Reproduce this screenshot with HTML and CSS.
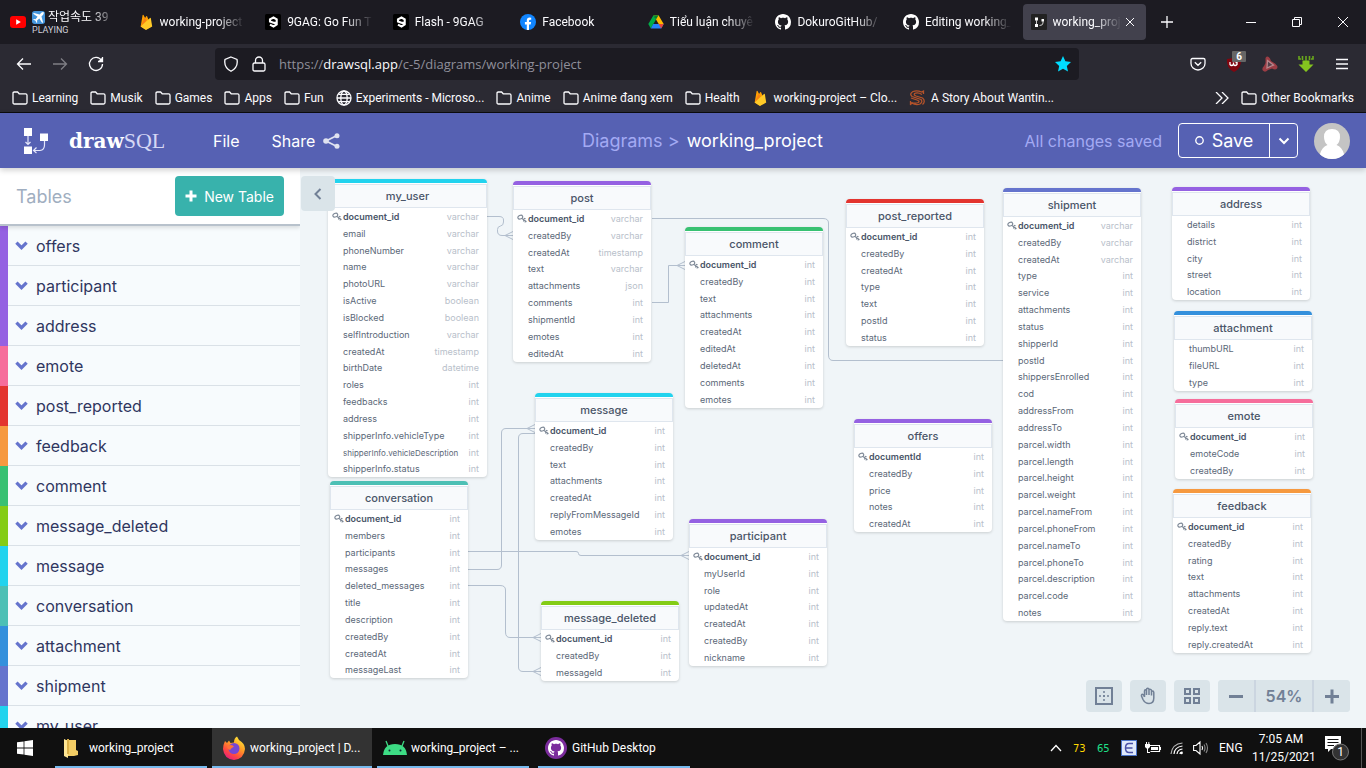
FILE: index.html
```html
<!DOCTYPE html>
<html lang="en">
<head>
<meta charset="utf-8">
<meta name="viewport" content="width=device-width, initial-scale=1">
<title>working_project | DrawSQL</title>
<link rel="stylesheet" href="styles.css">
</head>
<body>
<svg class="defs" aria-hidden="true">
  <symbol id="folder" viewBox="0 0 16 14"><path d="M1 11.5V2.3Q1 1 2.3 1H5.6L7.2 2.8H13.6Q15 2.8 15 4.2V11.5Q15 13 13.6 13H2.4Q1 13 1 11.5Z" fill="none" stroke="#fbfbfe" stroke-width="1.3"/></symbol>
  <symbol id="fire" viewBox="0 0 16 18"><path d="M2 14 4.2 1.2Q4.6.4 5.2 1.2L7 4.6 8.2 2.6Q8.7 2 9.200 2.600L14 14 8 17.600Z" fill="#ffa000"/><path d="M2 14 8.600 7.200 6.600 4 Z" fill="#f57f17"/><path d="M2 14 12.500 4.500Q13.300 4 13.500 5L15 14 9 17.500Q8 18 7 17.500Z" fill="#ffca28"/></symbol>
  <symbol id="ninegag" viewBox="0 0 16 16"><rect width="16" height="16" rx="1.500" fill="#000"/><path d="M11.700 8.300Q10.500 9.300 8.500 8.700L5 7.400V5.300L8.500 3.500 11.700 5.300V10.500L8.500 12.500 5 10.600" fill="none" stroke="#fff" stroke-width="2.100"/></symbol>
  <symbol id="github" viewBox="0 0 16 16"><path d="M8 0C3.580 0 0 3.580 0 8c0 3.540 2.290 6.530 5.470 7.590.4.070.55-.17.55-.38 0-.19-.01-.82-.01-1.490-2.010.37-2.530-.49-2.690-.94-.09-.23-.48-.94-.82-1.130-.28-.15-.68-.52-.01-.53.63-.01 1.080.58 1.230.82.72 1.210 1.870.87 2.330.66.07-.52.28-.87.51-1.070-1.780-.2-3.640-.89-3.640-3.950 0-.87.31-1.590.82-2.150-.08-.2-.36-1.020.08-2.120 0 0 .67-.21 2.200.82.64-.18 1.320-.27 2-.27s1.360.09 2 .27c1.530-1.040 2.200-.82 2.200-.82.44 1.100.16 1.920.08 2.120.51.56.82 1.270.82 2.150 0 3.070-1.870 3.750-3.650 3.950.29.25.54.73.54 1.480 0 1.070-.01 1.930-.01 2.200 0 .21.15.46.55.38A8.010 8.010 0 0 0 16 8c0-4.420-3.580-8-8-8Z"/></symbol>
  <symbol id="key" viewBox="0 0 10 9"><g fill="none" stroke="#7d8896" stroke-width="1.100"><ellipse cx="3.300" cy="3.200" rx="2.500" ry="1.800" transform="rotate(-25 3.300 3.200)"/><path d="M5 4.500 9.500 7.800M6.800 5.800 6.500 7.500M8.300 6.900 8.100 8.500M6.800 4.300 8.600 4.800"/></g></symbol>
  <symbol id="chev" viewBox="0 0 12 8"><path d="M1.300 1.300 6 6 10.700 1.300" fill="none" stroke="#6574cd" stroke-width="3"/></symbol>
</svg>

<header class="browser">
  <div class="tabstrip">
    <div class="tabs">
      <div class="tab">
        <svg class="fav" viewBox="0 0 16 16"><rect y="2" width="16" height="12" rx="3" fill="#f00"/><path d="M6.200 5.300V10.700L10.800 8Z" fill="#fff"/></svg>
        <div class="tab-text"><div class="tab-title"><svg class="plane" viewBox="0 0 14 14"><rect width="14" height="14" rx="3" fill="#4596dd"/><path d="M12.500 1.200Q11.500.6 10 2L8.300 3.900 2 2.200 1.200 3 6 6.300 3.800 8.800 1.800 8.500 1.200 9.200 3.700 10.500 5 12.900 5.600 12.300 5.400 10.300 7.900 8 11 12.800 11.900 12 10.200 5.800 12 4Q13.200 2.300 12.500 1.200Z" fill="#fff"/></svg> 작업속도 39</div><div class="playing">PLAYING</div></div>
      </div>
      <div class="tab"><svg class="fav"><use href="#fire"/></svg><div class="tab-title">working-project</div></div>
      <div class="tab"><svg class="fav"><use href="#ninegag"/></svg><div class="tab-title">9GAG: Go Fun T</div></div>
      <div class="tab"><svg class="fav"><use href="#ninegag"/></svg><div class="tab-title">Flash - 9GAG</div></div>
      <div class="tab"><svg class="fav" viewBox="0 0 16 16"><circle cx="8" cy="8" r="8" fill="#1185fe"/><path d="M6.800 16V10.400H4.900V8H6.800V6.500Q6.800 3.500 9.600 3.500L11.200 3.700V5.700H10.200Q9 5.700 9 6.900V8H11.100L10.700 10.400H9V16Z" fill="#fff"/></svg><div class="tab-title">Facebook</div></div>
      <div class="tab"><svg class="fav" viewBox="0 0 16 16"><path d="M5.500 1.200H10.500L15.700 10H10.700Z" fill="#ffba00"/><path d="M5.500 1.200 8 5.500 2.800 14.500.3 10Z" fill="#00ac47"/><path d="M5.200 10H15.700L13.200 14.500H2.800Z" fill="#2684fc"/><path d="M5.500 1.200H10.500L8 5.500Z" fill="#00832d"/><path d="M10.700 10H15.700L13.200 14.500Z" fill="#ea4335"/></svg><div class="tab-title">Tiểu luận chuyê</div></div>
      <div class="tab"><svg class="fav gh"><use href="#github"/></svg><div class="tab-title">DokuroGitHub/</div></div>
      <div class="tab"><svg class="fav gh"><use href="#github"/></svg><div class="tab-title">Editing working_</div></div>
      <div class="tab active"><svg class="fav" viewBox="0 0 16 16"><rect width="16" height="16" rx="1" fill="#222"/><path d="M4 3.500h3v3H4zM4 10h3v3H4zM10.500 5h2.500v2.500h-2.500z" fill="#fff"/><path d="M5.500 6V10M12 7V9Q12 11.500 8.500 11.500" fill="none" stroke="#ccc"/></svg><div class="tab-title">working_proje</div><button class="tab-close" aria-label="Close tab"><svg viewBox="0 0 8 8"><path d="M0 0 8 8M8 0 0 8"/></svg></button></div>
    </div>
    <button class="newtab" aria-label="New tab"><svg viewBox="0 0 12 12"><path d="M6 0V12M0 6H12"/></svg></button>
    <div class="winbtns">
      <button aria-label="Minimize"><svg viewBox="0 0 10 10"><path d="M0 5.500H10"/></svg></button>
      <button aria-label="Restore"><svg viewBox="0 0 10 10"><path d="M.5 2.500H7.500V9.500H.5ZM2.500 2.500V.5H9.500V7.500H7.500"/></svg></button>
      <button aria-label="Close"><svg viewBox="0 0 10 10"><path d="M0 0 10 10M10 0 0 10"/></svg></button>
    </div>
  </div>
  <div class="navbar">
    <div class="navbtns">
      <button aria-label="Back"><svg viewBox="0 0 16 16"><path d="M15 8H1.500M7 2.500 1.500 8 7 13.500"/></svg></button>
      <button class="dim" aria-label="Forward"><svg viewBox="0 0 16 16"><path d="M1 8H14.500M9 2.500 14.500 8 9 13.500"/></svg></button>
      <button aria-label="Reload"><svg viewBox="0 0 16 16"><path d="M13.500 4.500A6.500 6.500 0 1 0 14.500 8M14.500 1V5.500H10"/><path d="M14.800 1V5.800H10Z" fill="#fbfbfe" stroke="none"/></svg></button>
    </div>
    <div class="urlbar">
      <svg viewBox="0 0 16 16"><path d="M8 1 14 3.500Q15.500 11 8 15.300.5 11 2 3.500Z"/></svg>
      <svg viewBox="0 0 16 16"><path d="M3.500 7H12.500Q14 7 14 8.500V13.500Q14 15 12.500 15H3.500Q2 15 2 13.500V8.500Q2 7 3.500 7ZM4.500 7V4.500A3.500 3.500 0 0 1 11.500 4.500V7"/></svg>
      <div class="url" role="textbox" aria-label="Address" contenteditable="true">https://<b>drawsql.app</b>/c-5/diagrams/working-project</div>
      <svg class="star" viewBox="0 0 16 16"><path d="M8 0 10.400 5.300 16 6 11.800 9.900 13 15.600 8 12.700 3 15.600 4.200 9.900 0 6 5.600 5.300Z"/></svg>
    </div>
    <div class="exts">
      <button aria-label="Pocket"><svg viewBox="0 0 16 16"><path d="M2.500 2.500H13.500Q15 2.500 15 4V7.500A7 6.500 0 0 1 1 7.500V4Q1 2.500 2.500 2.500ZM4.800 6.200 8 9.300 11.200 6.200" fill="none"/></svg></button>
      <button class="ublock" aria-label="uBlock Origin"><svg viewBox="0 0 16 16"><path d="M8 1Q11 3 15 3 16 12 8 16 0 12 1 3 5 3 8 1Z" fill="#800610" stroke="none"/><path d="M4 6V8.500Q5.500 10.500 7.500 8.500V6.500M7.500 8.500Q9 10.500 11 8.500V6.500H9.500" stroke="#fff"/></svg><span>6</span></button>
      <button aria-label="Extension"><svg viewBox="0 0 16 16"><path d="M3.500 2Q5.500-1 8 2.500L9 5 13 7.500Q17 11 14.500 13 13 14 10 12.500L6 14Q3 17 .8 14.500-.5 12.500 2 10L3.500 7Z" fill="#9c3d45" stroke="none"/><path d="M5.500 4.500 11.500 9 5 12Z" fill="#55404a" stroke="#b9868c"/></svg></button>
      <button aria-label="Downloads"><svg viewBox="0 0 16 16"><path d="M4.500 4.500H11.500V8.500H15.500L8 16 .5 8.500H4.500Z" fill="#84c41f" stroke="none"/><path d="M1 0V3H3M15 0V3H13M4.500 0V4M8 0V5M11.500 0V4" stroke="#6aa81c" stroke-width="1.600"/></svg></button>
      <button aria-label="Menu"><svg viewBox="0 0 16 16"><path d="M2 3.500H14M2 8H14M2 12.500H14"/></svg></button>
    </div>
  </div>
  <nav class="bookmarks">
    <a href="#"><svg><use href="#folder"/></svg>Learning</a>
    <a href="#"><svg><use href="#folder"/></svg>Musik</a>
    <a href="#"><svg><use href="#folder"/></svg>Games</a>
    <a href="#"><svg><use href="#folder"/></svg>Apps</a>
    <a href="#"><svg><use href="#folder"/></svg>Fun</a>
    <a href="#" class="globe"><svg viewBox="0 0 16 16"><g fill="none" stroke="#fbfbfe" stroke-width="1.300"><circle cx="8" cy="8" r="7"/><ellipse cx="8" cy="8" rx="3.200" ry="7"/><path d="M1 8H15M2.500 4.300H13.500M2.500 11.700H13.500"/></g></svg>Experiments - Microso...</a>
    <a href="#"><svg><use href="#folder"/></svg>Anime</a>
    <a href="#"><svg><use href="#folder"/></svg>Anime đang xem</a>
    <a href="#"><svg><use href="#folder"/></svg>Health</a>
    <a href="#" class="site"><svg><use href="#fire"/></svg>working-project – Clo...</a>
    <a href="#" class="site"><svg viewBox="0 0 16 16"><g fill="none" stroke="#b5532a" stroke-width="1.300"><path d="M14.500 4V1L12.500 2Q8 0 4 1.500 0 4 3 6.500L12 9.500Q14 12 11 14 7 15.500 2.500 13L1.500 15V11"/><path d="M13 4.500Q9 2 5.500 3.500 4.500 5 7 6L13.500 8Q17 11 13.500 14.500M2.500 12.500Q6 14 9.500 12.500 11 11 8 10L2 8"/></g></svg>A Story About Wantin...</a>
    <button class="more" aria-label="More bookmarks"><svg viewBox="0 0 14 12"><path d="M1 0 7 6 1 12M7 0 13 6 7 12"/></svg></button>
    <a href="#" class="other"><svg><use href="#folder"/></svg>Other Bookmarks</a>
  </nav>
</header>

<div class="app">
  <header class="appbar">
    <a class="logo" href="#" aria-label="drawSQL">
      <svg viewBox="0 0 24 26"><path d="M0 0H8V8H0ZM0 18.500H8V26H0ZM16 5.500H24V13H16Z" fill="#fff"/><path d="M4 8V16M1.500 14 4 16.500 6.500 14M20.500 13V17Q20.500 22 16 22.500H9.500M12.500 19.500 9.500 22.500 12.500 25" fill="none" stroke="#e4e6fa" stroke-width="1.200"/></svg>
      <span class="brand"><b>draw</b><span>SQL</span></span>
    </a>
    <button class="menu">File</button>
    <button class="menu share">Share <svg viewBox="0 0 17 16"><path d="M14 2.500 3 8 14 13.500" fill="none" stroke="#dfe2f0" stroke-width="1.800"/><g fill="#dfe2f0"><circle cx="14" cy="2.700" r="2.500"/><circle cx="3" cy="8" r="2.800"/><circle cx="14" cy="13.300" r="2.500"/></g></svg></button>
    <nav class="crumbs"><a href="#">Diagrams &gt;</a> <span>working_project</span></nav>
    <span class="saved">All changes saved</span>
    <div class="savegroup">
      <button class="save"><svg viewBox="0 0 8 8"><circle cx="4" cy="4" r="3.300" fill="none" stroke="#fff" stroke-width="1.200"/></svg>Save</button>
      <button class="drop" aria-label="Save options"><svg viewBox="0 0 12 8"><path d="M1.500 1.500 6 6 10.500 1.500" fill="none" stroke="#fff" stroke-width="2"/></svg></button>
    </div>
    <svg class="avatar" viewBox="0 0 36 36"><defs><clipPath id="av"><circle cx="18" cy="18" r="18"/></clipPath></defs><g clip-path="url(#av)"><rect width="36" height="36" fill="#c4c4c4"/><path d="M10 14Q10 6 18 6T26 14Q26 19 22.500 22 28 24 30 31L30 36H6V31Q8 24 13.500 22 10 19 10 14Z" fill="#fff"/></g></svg>
  </header>

  <div class="work">
    <aside class="sidebar">
      <div class="side-head"><h2>Tables</h2><button class="new"><svg viewBox="0 0 12 12"><path d="M6 .5V11.500M.5 6H11.500" stroke="#fff" stroke-width="3"/></svg>New Table</button></div>
      <ul class="list">
        <li class="purple"><button><svg><use href="#chev"/></svg>offers</button></li>
        <li class="purple"><button><svg><use href="#chev"/></svg>participant</button></li>
        <li class="purple"><button><svg><use href="#chev"/></svg>address</button></li>
        <li class="pink"><button><svg><use href="#chev"/></svg>emote</button></li>
        <li class="red"><button><svg><use href="#chev"/></svg>post_reported</button></li>
        <li class="orange"><button><svg><use href="#chev"/></svg>feedback</button></li>
        <li class="green"><button><svg><use href="#chev"/></svg>comment</button></li>
        <li class="lime"><button><svg><use href="#chev"/></svg>message_deleted</button></li>
        <li class="cyan"><button><svg><use href="#chev"/></svg>message</button></li>
        <li class="teal"><button><svg><use href="#chev"/></svg>conversation</button></li>
        <li class="blue"><button><svg><use href="#chev"/></svg>attachment</button></li>
        <li class="indigo"><button><svg><use href="#chev"/></svg>shipment</button></li>
        <li class="cyan"><button><svg><use href="#chev"/></svg>my_user</button></li>
      </ul>
    </aside>
    <main class="canvas">
      <svg class="links" aria-hidden="true"><g transform="translate(-300 -168)">
        <path d="M487 216.500H499Q503.500 216.500 503.500 220V222Q503.500 225.500 500.500 226 497.500 226.500 497.500 229.500V231Q497.500 235.500 502 235.500H513M505 235.500 513 231.500M505 235.500 513 239.500"/>
        <path d="M652 218.500H823Q828.500 218.500 828.500 223V355Q828.500 360.500 833 360.500H1003"/>
        <path d="M652 302.500H668.500V265.500H685M677 265.500 685 261.500M677 265.500 685 269.500"/>
        <path d="M468 569.500H497Q501.500 569.500 501.500 565V433Q501.500 428.500 506 428.500H535M527 428.500 535 424.500M527 428.500 535 432.500"/>
        <path d="M535 433.500H523Q518.500 433.500 518.500 438V667Q518.500 671.500 523 671.500H541M533 671.500 541 667.500M533 671.500 541 675.500"/>
        <path d="M468 585.500H500Q505.500 585.500 505.500 590V632Q505.500 637.500 510 637.500H541M533 637.500 541 633.500M533 637.500 541 641.500"/>
        <path d="M468 551.500H576Q578.500 551.500 578.500 553.500T581 555.500H689M681 555.500 689 551.500M681 555.500 689 559.500"/>
      </g></svg>

      <section class="node n-user cyan"><h3>my_user</h3><table>
        <tr class="pk"><td><svg><use href="#key"/></svg>document_id<td>varchar
        <tr><td>email<td>varchar
        <tr><td>phoneNumber<td>varchar
        <tr><td>name<td>varchar
        <tr><td>photoURL<td>varchar
        <tr><td>isActive<td>boolean
        <tr><td>isBlocked<td>boolean
        <tr><td>selfIntroduction<td>varchar
        <tr><td>createdAt<td>timestamp
        <tr><td>birthDate<td>datetime
        <tr><td>roles<td>int
        <tr><td>feedbacks<td>int
        <tr><td>address<td>int
        <tr><td>shipperInfo.vehicleType<td>int
        <tr><td class="long">shipperInfo.vehicleDescription<td>int
        <tr><td>shipperInfo.status<td>int
      </table></section>
      <section class="node n-post purple"><h3>post</h3><table>
        <tr class="pk"><td><svg><use href="#key"/></svg>document_id<td>varchar
        <tr><td>createdBy<td>varchar
        <tr><td>createdAt<td>timestamp
        <tr><td>text<td>varchar
        <tr><td>attachments<td>json
        <tr><td>comments<td>int
        <tr><td>shipmentId<td>int
        <tr><td>emotes<td>int
        <tr><td>editedAt<td>int
      </table></section>
      <section class="node n-comment green"><h3>comment</h3><table>
        <tr class="pk"><td><svg><use href="#key"/></svg>document_id<td>int
        <tr><td>createdBy<td>int
        <tr><td>text<td>int
        <tr><td>attachments<td>int
        <tr><td>createdAt<td>int
        <tr><td>editedAt<td>int
        <tr><td>deletedAt<td>int
        <tr><td>comments<td>int
        <tr><td>emotes<td>int
      </table></section>
      <section class="node n-reported red"><h3>post_reported</h3><table>
        <tr class="pk"><td><svg><use href="#key"/></svg>document_id<td>int
        <tr><td>createdBy<td>int
        <tr><td>createdAt<td>int
        <tr><td>type<td>int
        <tr><td>text<td>int
        <tr><td>postId<td>int
        <tr><td>status<td>int
      </table></section>
      <section class="node n-shipment indigo"><h3>shipment</h3><table>
        <tr class="pk"><td><svg><use href="#key"/></svg>document_id<td>varchar
        <tr><td>createdBy<td>varchar
        <tr><td>createdAt<td>varchar
        <tr><td>type<td>int
        <tr><td>service<td>int
        <tr><td>attachments<td>int
        <tr><td>status<td>int
        <tr><td>shipperId<td>int
        <tr><td>postId<td>int
        <tr><td>shippersEnrolled<td>int
        <tr><td>cod<td>int
        <tr><td>addressFrom<td>int
        <tr><td>addressTo<td>int
        <tr><td>parcel.width<td>int
        <tr><td>parcel.length<td>int
        <tr><td>parcel.height<td>int
        <tr><td>parcel.weight<td>int
        <tr><td>parcel.nameFrom<td>int
        <tr><td>parcel.phoneFrom<td>int
        <tr><td>parcel.nameTo<td>int
        <tr><td>parcel.phoneTo<td>int
        <tr><td>parcel.description<td>int
        <tr><td>parcel.code<td>int
        <tr><td>notes<td>int
      </table></section>
      <section class="node n-address purple"><h3>address</h3><table>
        <tr><td>details<td>int
        <tr><td>district<td>int
        <tr><td>city<td>int
        <tr><td>street<td>int
        <tr><td>location<td>int
      </table></section>
      <section class="node n-attachment blue"><h3>attachment</h3><table>
        <tr><td>thumbURL<td>int
        <tr><td>fileURL<td>int
        <tr><td>type<td>int
      </table></section>
      <section class="node n-emote pink"><h3>emote</h3><table>
        <tr class="pk"><td><svg><use href="#key"/></svg>document_id<td>int
        <tr><td>emoteCode<td>int
        <tr><td>createdBy<td>int
      </table></section>
      <section class="node n-feedback orange"><h3>feedback</h3><table>
        <tr class="pk"><td><svg><use href="#key"/></svg>document_id<td>int
        <tr><td>createdBy<td>int
        <tr><td>rating<td>int
        <tr><td>text<td>int
        <tr><td>attachments<td>int
        <tr><td>createdAt<td>int
        <tr><td>reply.text<td>int
        <tr><td>reply.createdAt<td>int
      </table></section>
      <section class="node n-message cyan"><h3>message</h3><table>
        <tr class="pk"><td><svg><use href="#key"/></svg>document_id<td>int
        <tr><td>createdBy<td>int
        <tr><td>text<td>int
        <tr><td>attachments<td>int
        <tr><td>createdAt<td>int
        <tr><td>replyFromMessageId<td>int
        <tr><td>emotes<td>int
      </table></section>
      <section class="node n-conversation teal"><h3>conversation</h3><table>
        <tr class="pk"><td><svg><use href="#key"/></svg>document_id<td>int
        <tr><td>members<td>int
        <tr><td>participants<td>int
        <tr><td>messages<td>int
        <tr><td>deleted_messages<td>int
        <tr><td>title<td>int
        <tr><td>description<td>int
        <tr><td>createdBy<td>int
        <tr><td>createdAt<td>int
        <tr><td>messageLast<td>int
      </table></section>
      <section class="node n-participant purple"><h3>participant</h3><table>
        <tr class="pk"><td><svg><use href="#key"/></svg>document_id<td>int
        <tr><td>myUserId<td>int
        <tr><td>role<td>int
        <tr><td>updatedAt<td>int
        <tr><td>createdAt<td>int
        <tr><td>createdBy<td>int
        <tr><td>nickname<td>int
      </table></section>
      <section class="node n-deleted lime"><h3>message_deleted</h3><table>
        <tr class="pk"><td><svg><use href="#key"/></svg>document_id<td>int
        <tr><td>createdBy<td>int
        <tr><td>messageId<td>int
      </table></section>
      <section class="node n-offers purple"><h3>offers</h3><table>
        <tr class="pk"><td><svg><use href="#key"/></svg>documentId<td>int
        <tr><td>createdBy<td>int
        <tr><td>price<td>int
        <tr><td>notes<td>int
        <tr><td>createdAt<td>int
      </table></section>

      <button class="collapse" aria-label="Collapse sidebar"><svg viewBox="0 0 8 12"><path d="M6.500 1 1.500 6 6.500 11" fill="none" stroke="#718096" stroke-width="2"/></svg></button>
      <div class="tools">
        <button aria-label="Fit to screen"><svg viewBox="0 0 18 18"><path d="M1 1H17V17H1Z" stroke-width="2"/><path d="M9 4V6M9 8V10M9 12V14M4 9H6M12 9H14M8 9H10" stroke-width="1.500"/></svg></button>
        <button aria-label="Pan"><svg viewBox="0 0 18 18"><path d="M5.500 10V4Q5.500 2.800 6.500 2.800T7.500 4V8M7.500 4V2.500Q7.500 1.200 8.700 1.200T10 2.500V8M10 3.500Q10 2 11.200 2.200 12.500 2.300 12.500 3.800V8.500M12.500 5Q12.500 4 13.600 4T14.800 5.500V11Q14.800 16.500 10 16.500 6 16.500 4 12.500L2.500 9Q2.200 7.500 3.500 7.300 4.500 7.300 5.500 10" stroke-width="1.500"/></svg></button>
        <button aria-label="Arrange"><svg viewBox="0 0 18 18"><path d="M2 2H7V7H2ZM11 2H16V7H11ZM2 11H7V16H2ZM11 11H16V16H11Z" stroke-width="2"/></svg></button>
        <div class="zoom">
          <button aria-label="Zoom out"><svg viewBox="0 0 18 18"><path d="M2 9.500H16" stroke-width="3"/></svg></button><span>54%</span><button aria-label="Zoom in"><svg viewBox="0 0 18 18"><path d="M2 9.500H16M9 2.500V16.500" stroke-width="3"/></svg></button>
        </div>
      </div>
    </main>
  </div>
</div>

<footer class="taskbar">
  <button class="start" aria-label="Start"><svg viewBox="0 0 16 16"><path d="M0 2.300 6.600 1.400V7.600H0ZM7.400 1.300 16 0V7.600H7.400ZM0 8.400H6.600V14.600L0 13.700ZM7.400 8.400H16V16L7.400 14.700Z" fill="#fff"/></svg></button>
  <button class="task"><svg viewBox="0 0 24 24"><path d="M4 4H15V14L17 15V19L13 20H4Z" fill="#f3cd65"/><path d="M3 3 7 5V22L3 20Z" fill="#ffe694"/><path d="M6 3H8V18H6Z" fill="#dcb148"/></svg><span>working_project</span></button>
  <button class="task current"><svg viewBox="0 0 24 24"><defs><linearGradient id="fx" x1="0.800" y1="0" x2="0.200" y2="1"><stop offset="0" stop-color="#fff03b"/><stop offset=".4" stop-color="#ff9a25"/><stop offset=".7" stop-color="#ff4a40"/><stop offset="1" stop-color="#e31587"/></linearGradient></defs><path d="M12 24Q2 23 1 13 1 9 3 5L5 7 7 4.500 8.500 7 12 6.500Q12 2 15 .5L17 4Q23 7.500 23 13 22 23 12 24Z" fill="url(#fx)"/><circle cx="12" cy="12.500" r="5.500" fill="#7746d4"/><path d="M5 11Q8 7.500 12 10.500 9 12 8 14 6 14 5 11Z" fill="#ff7139"/></svg><span>working_project | D...</span></button>
  <button class="task"><svg viewBox="0 0 24 24"><path d="M0 19Q1 8 12 8T24 19Z" fill="#3ddc84"/><path d="M5 10 3 5M19 10 21 5" stroke="#3ddc84" stroke-width="1.300"/><circle cx="6.500" cy="14.500" r="1" fill="#123"/><circle cx="17.500" cy="14.500" r="1" fill="#123"/></svg><span>working_project – ...</span></button>
  <button class="task"><svg viewBox="0 0 24 24"><circle cx="12" cy="12" r="11" fill="#7b2c9c"/><g transform="translate(4 4)" fill="#fff"><use href="#github" width="16" height="16"/></g></svg><span>GitHub Desktop</span></button>
  <div class="tray">
    <svg class="up" viewBox="0 0 12 16"><path d="M1 11 6 5.500 11 11" fill="none" stroke="#fff" stroke-width="1.300"/></svg>
    <span class="temp hot">73</span><span class="temp cool">65</span>
    <svg class="ime" viewBox="0 0 16 16"><rect width="16" height="16" fill="#dfe9fb"/><rect x=".5" y=".5" width="15" height="15" fill="none" stroke="#4d74c8"/><path d="M12 3.500H8Q4.500 3.500 4.500 8T8 12.500H12M4.500 8H11.500" fill="none" stroke="#4a52a8" stroke-width="1.500"/></svg>
    <svg viewBox="0 0 16 16"><path d="M4.500 5.500H14.500V11.500H5.500" fill="none" stroke="#fff" stroke-width="1.200"/><path d="M6 7H13V10H6ZM15 7H16V10H15ZM0 4H5V7L3.500 8.500H1.500L0 7ZM1 2H2V4H1ZM3.300 2H4.300V4H3.300ZM2 8H3V12H5V13H2Z" fill="#fff"/></svg>
    <svg class="wifi" viewBox="0 0 16 16"><g fill="none" stroke="#fff" stroke-width="1.200"><path d="M2 14Q3 4 13.500 3" opacity=".7"/><path d="M5 14Q5.500 7 13.500 6"/><path d="M8 14Q8.500 9.500 13.500 9"/><path d="M11 14Q11 12 13.500 12"/></g><circle cx="12.500" cy="13" r="1.300" fill="#fff"/></svg>
    <svg viewBox="0 0 16 16"><g fill="none" stroke="#fff" stroke-width="1.100"><path d="M.6 5.500H3L7 2V14L3 10.500H.6ZM9 6Q10.200 8 9 10"/><path d="M11 4.500Q13 8 11 11.500M13 3Q16 8 13 13" opacity=".5"/></g></svg>
    <span class="lang">ENG</span>
    <div class="clock"><div>7:05 AM</div><div>11/25/2021</div></div>
    <svg class="notif" viewBox="0 0 26 26"><path d="M2 1H18V14H8L5 17V14H2Z" fill="#fff"/><path d="M4.500 4.500H15.500M4.500 7.500H15.500M4.500 10.500H11" stroke="#101010" stroke-width="1.200"/><circle cx="17.500" cy="17" r="8" fill="#333" stroke="#777"/><text x="17.500" y="21" text-anchor="middle" font-size="12" fill="#fff">1</text></svg>
  </div>
</footer>
</body>
</html>
```
FILE: styles.css
```css
* { box-sizing: border-box; }
body {
  margin: 0;
  height: 100vh;
  display: flex;
  flex-direction: column;
  overflow: hidden;
  font-family: Roboto, "Noto Sans", "Noto Sans CJK KR", sans-serif;
  font-size: 12px;
}
button { margin: 0; padding: 0; border: 0; background: none; font: inherit; color: inherit; }
a { color: inherit; text-decoration: none; }
h2, h3, ul { margin: 0; padding: 0; font-weight: 400; }
ul { list-style: none; }
svg { flex: none; display: block; }
.defs { position: absolute; width: 0; height: 0; }

/* Browser window */
.browser { flex: none; background: #2b2a33; color: #fbfbfe; border-bottom: 1px solid #0c0c0d; }
.tabstrip { display: flex; height: 44px; background: #1c1b22; padding-left: 2px; }
.tabs { flex: 0 1 1144px; display: flex; gap: 4px; min-width: 0; padding: 4px 0; }
.tab { flex: 1 1 0; min-width: 0; display: flex; align-items: center; gap: 6px; padding: 0 8px; border-radius: 4px; }
.tab.active { background: #42414d; }
.fav { width: 16px; height: 16px; }
.gh { fill: #fff; }
.tab-text { flex: 1; min-width: 0; }
.tab-title {
  flex: 1;
  min-width: 0;
  overflow: hidden;
  white-space: nowrap;
  line-height: 16px;
  mask-image: linear-gradient(to left, transparent, #000 28px);
}
.plane { display: inline-block; width: 13px; height: 13px; vertical-align: -3px; }
.playing { font-size: 9px; line-height: 11px; color: #cfcfd8; }
.tab-close { width: 16px; height: 16px; display: grid; place-items: center; margin-left: -6px; }
.tab-close svg { width: 8px; height: 8px; }
.tab-close svg, .newtab svg, .winbtns svg, .more svg { fill: none; stroke: #fbfbfe; }
.newtab { width: 42px; display: grid; place-items: center; }
.newtab svg { width: 12px; height: 12px; stroke-width: 1.3; }
.winbtns { display: flex; margin-left: auto; }
.winbtns button { width: 46px; display: grid; place-items: center; }
.winbtns svg { width: 10px; height: 10px; }

.navbar { display: flex; align-items: center; height: 40px; padding: 0 6px; }
.navbtns { flex: 0 1 209px; display: flex; }
.navbtns button { width: 36px; height: 32px; display: grid; place-items: center; }
.navbtns svg, .urlbar svg, .exts svg { width: 16px; height: 16px; fill: none; stroke: #fbfbfe; stroke-width: 1.3; }
.dim { opacity: .4; }
.urlbar { flex: 1; min-width: 0; display: flex; align-items: center; gap: 12px; height: 32px; padding: 0 8px; border-radius: 4px; background: #1c1b22; }
.url { flex: 1; min-width: 0; font-family: "Open Sans", sans-serif; font-size: 13px; color: #8f8f9a; overflow: hidden; white-space: nowrap; }
.url b { font-weight: 400; color: #fbfbfe; }
.urlbar .star { fill: #00ddff; stroke: none; }
.exts { display: flex; margin-left: 101px; }
.exts button { width: 36px; height: 32px; display: grid; place-items: center; position: relative; }
.exts span { position: absolute; left: 16px; top: 3px; width: 14px; height: 11px; border-radius: 1px; background: #666; color: #fff; font-size: 10px; font-weight: 700; line-height: 11px; }

.bookmarks { display: flex; align-items: center; height: 28px; padding: 0 12px; gap: 12px; white-space: nowrap; }
.bookmarks a { display: flex; align-items: center; gap: 4px; }
.bookmarks svg { width: 16px; height: 14px; }
.bookmarks .globe svg, .bookmarks .site svg { height: 16px; }
.bookmarks .site { gap: 6px; }
.bookmarks .more { margin-left: auto; }
.more svg { width: 14px; height: 12px; stroke-width: 1.3; }

/* Application */
.app { flex: 1; min-height: 0; display: flex; flex-direction: column; font-family: Inter, "Open Sans", sans-serif; }
.appbar {
  flex: none;
  position: relative;
  z-index: 3;
  display: flex;
  align-items: center;
  height: 55px;
  padding: 0 16px 0 24px;
  background: #5661b3;
  color: #fff;
  font-size: 16px;
  white-space: nowrap;
  box-shadow: 0 2px 6px rgba(0, 0, 0, .2);
}
.logo { display: flex; align-items: center; gap: 21px; width: 189px; }
.logo svg { width: 24px; height: 26px; }
.brand { font: 20px/24px "DejaVu Serif", serif; }
.brand span { font-family: "Liberation Serif", serif; font-size: 22px; color: #d5d8f5; }
.share { display: flex; align-items: center; gap: 8px; margin: 0 40px 0 32px; }
.share svg { width: 17px; height: 16px; }
.crumbs { margin: 0 auto; font-size: 18px; }
.crumbs a { color: #a3aaf3; margin-right: 2px; }
.saved { color: #a3aaf3; }
.savegroup { display: flex; width: 120px; height: 35px; margin: 0 16px; border: 1px solid #fff; border-radius: 4px; }
.save { flex: 1; display: flex; align-items: center; justify-content: center; gap: 8px; font-size: 18px; }
.save svg { width: 9px; height: 9px; }
.drop { width: 28px; display: grid; place-items: center; border-left: 1px solid #fff; }
.drop svg { width: 12px; height: 8px; }
.avatar { width: 36px; height: 36px; }

.work { flex: 1; min-height: 0; display: flex; }
.sidebar { flex: none; width: 300px; display: flex; flex-direction: column; background: #f7fbfd; box-shadow: 1px 0 3px rgba(0, 0, 0, .15); }
.side-head {
  flex: none;
  position: relative;
  display: flex;
  align-items: center;
  justify-content: space-between;
  height: 58px;
  padding: 0 16px;
  background: #fff;
  border-bottom: 2px solid #b8c2cc;
  box-shadow: 0 2px 4px rgba(0, 0, 0, .12);
}
.side-head h2 { font-size: 18px; color: #a0aec0; }
.new { display: flex; align-items: center; gap: 7px; height: 40px; padding: 0 10px; border-radius: 4px; background: #38b2ac; color: #fff; font-size: 14px; }
.new svg { width: 12px; height: 12px; }
.list { flex: 1; overflow: hidden; }
.list li { height: 40px; border-left: 8px solid var(--c); }
.list button { display: flex; align-items: center; gap: 8px; width: 100%; height: 40px; padding-left: 7px; border-bottom: 1px solid #dae1e7; color: #2f365f; font-size: 16px; }
.list svg { width: 13px; height: 9px; }

.purple { --c: #9561e2; }
.pink { --c: #f66d9b; }
.red { --c: #e3342f; }
.orange { --c: #f6993f; }
.green { --c: #38c172; }
.lime { --c: #84cc16; }
.cyan { --c: #22d3ee; }
.teal { --c: #4dc0b5; }
.blue { --c: #3490dc; }
.indigo { --c: #6574cd; }

/* Diagram */
.canvas { flex: 1; min-width: 0; position: relative; overflow: hidden; background: #f0f5f8; }
.links { position: absolute; inset: 0; width: 100%; height: 100%; }
.links path { fill: none; stroke: #b3bfce; }
.node { position: absolute; width: 138px; background: #fff; border-top: 4px solid var(--c); border-radius: 4px; box-shadow: 0 1px 3px rgba(0, 0, 0, .16); color: #5b6878; }
.node h3 { margin-top: 1px; height: 24px; border: 1px solid #dfe6ee; background: #f8fafc; color: #4a5568; font-size: 11px; font-weight: 500; line-height: 23px; text-align: center; }
.node table { width: 100%; border-collapse: collapse; font-size: 9px; }
.node td { height: 17px; padding: 0; line-height: 16px; white-space: nowrap; }
.node tr:nth-child(6n + 4) td { height: 16px; }
.node td:first-child { width: 100%; max-width: 0; padding-left: 15px; }
.node td:last-child { padding-right: 8px; text-align: right; color: #b8c0ca; }
.node .long { font-size: 8px; }
.pk td:first-child { font-weight: 600; color: #4a5568; }
.pk svg { display: inline-block; width: 10px; height: 9px; margin: 0 1px 0 -11px; vertical-align: -1px; }
.node.n-user { left: 28px; top: 11px; width: 159px; }
.n-post { left: 213px; top: 13px; }
.n-comment { left: 385px; top: 59px; }
.n-reported { left: 546px; top: 31px; }
.n-shipment { left: 703px; top: 20px; }
.n-address { left: 872px; top: 19px; }
.n-attachment { left: 874px; top: 143px; }
.n-emote { left: 875px; top: 231px; }
.n-feedback { left: 873px; top: 321px; }
.n-message { left: 235px; top: 225px; }
.n-conversation { left: 30px; top: 313px; }
.n-participant { left: 389px; top: 351px; }
.n-deleted { left: 241px; top: 433px; }
.n-offers { left: 554px; top: 251px; }

.collapse { position: absolute; left: 1px; top: 8px; width: 34px; height: 35px; display: grid; place-items: center; border-radius: 4px; background: #dae4e9; }
.collapse svg { width: 8px; height: 12px; }
.tools { position: absolute; right: 16px; bottom: 16px; display: flex; gap: 8px; color: #718096; }
.tools button { width: 36px; height: 32px; display: grid; place-items: center; border-radius: 4px; background: #dae4e9; }
.tools svg { width: 18px; height: 18px; fill: none; stroke: #718096; }
.zoom { display: flex; background: #dae4e9; border-radius: 4px; }
.zoom span { width: 60px; border: solid #cbd5e0; border-width: 0 2px; font-size: 16px; font-weight: 600; line-height: 32px; text-align: center; }

/* Taskbar */
.taskbar { flex: none; display: flex; gap: 1px; height: 40px; background: #101010; color: #fff; }
.start { width: 50px; display: grid; place-items: center; }
.start svg { width: 16px; height: 16px; }
.task { position: relative; width: 160px; display: flex; align-items: center; gap: 4px; padding-left: 10px; text-align: left; white-space: nowrap; }
.task svg { width: 24px; height: 24px; }
.task::after { content: ""; position: absolute; left: 4px; right: 4px; bottom: 0; height: 2px; background: #76b9ed; }
.current { background: #333; }
.current::after { left: 0; right: 0; }
.tray { display: flex; align-items: center; margin-left: auto; margin-right: 4px; padding-right: 12px; border-right: 1px solid #555; }
.tray svg { width: 16px; height: 16px; margin-right: 8px; }
.tray .up { width: 12px; margin-right: 11px; }
.temp { width: 24px; font: 10px "DejaVu Sans", sans-serif; }
.hot { color: #ffd800; }
.cool { color: #1fe08a; }
.tray .lang { width: 33px; margin-left: 2px; }
.clock { width: 58px; text-align: center; line-height: 18px; }
.tray .notif { width: 26px; height: 26px; margin: 0 0 0 13px; }
```
